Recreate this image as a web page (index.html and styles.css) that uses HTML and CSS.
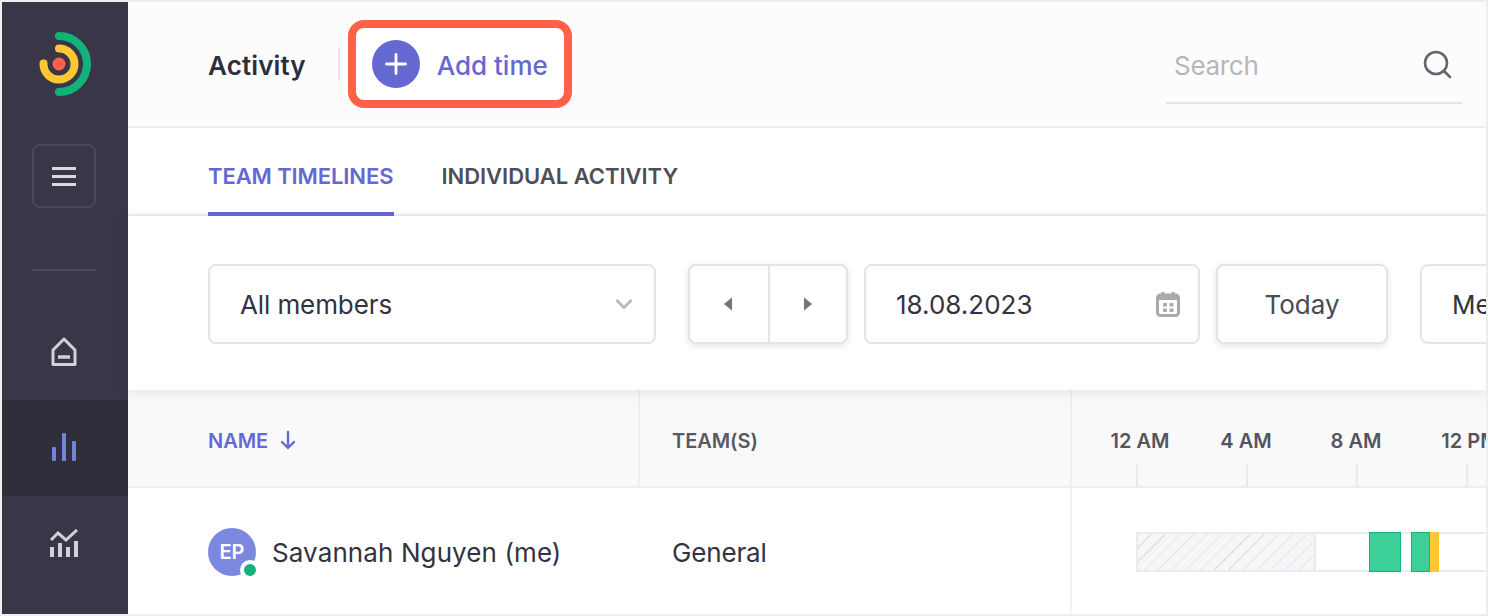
FILE: index.html
```html
<!DOCTYPE html>
<html lang="en">
<head>
<meta charset="utf-8">
<title>Activity</title>
<link rel="stylesheet" href="styles.css">
</head>
<body>
<div class="frame">
  <aside class="sidebar">
    <div class="logo">
      <svg width="64" height="72" viewBox="0 0 64 72" fill="none" stroke-linecap="round" stroke-width="8">
        <path d="M32 8a28 28 0 0 1 0 56" stroke="#12b27b"/>
        <path d="M32 20.500a15.500 15.500 0 1 1-15.500 15" stroke="#ffc833"/>
        <circle cx="32" cy="36" r="6.500" fill="#ff6148" stroke="none"/>
      </svg>
    </div>
    <button class="menu-btn" aria-label="Menu">
      <span class="menu-line"></span><span class="menu-line"></span><span class="menu-line"></span>
    </button>
    <div class="side-divider"></div>
    <div class="side-item">
      <svg width="26" height="30" viewBox="0 0 26 30" fill="none" stroke="#d2d2d6" stroke-width="3" stroke-linejoin="round">
        <path d="M2 13 13 2l11 11v14.500H2z"/>
        <path d="M7 20h12" stroke-width="3.500"/>
      </svg>
    </div>
    <div class="side-item active">
      <svg width="24" height="30" viewBox="0 0 24 30" fill="#7483dd">
        <rect x="0" y="14" width="4" height="14" rx="1"/>
        <rect x="10" y="0" width="4" height="28" rx="1"/>
        <rect x="20" y="8" width="4" height="20" rx="1"/>
      </svg>
    </div>
    <div class="side-item">
      <svg width="30" height="30" viewBox="0 0 30 30" fill="#d2d2d6">
        <path d="M2 11 9 4l8 7L28 1" fill="none" stroke="#d2d2d6" stroke-width="3"/>
        <rect x="1" y="18" width="4" height="10"/>
        <rect x="9" y="14" width="4" height="14"/>
        <rect x="17" y="18" width="4" height="10"/>
        <rect x="25" y="12" width="4" height="16"/>
      </svg>
    </div>
  </aside>

  <main class="main">
    <header class="topbar">
      <h1 class="page-title">Activity</h1>
      <span class="title-sep"></span>
      <button class="add-time">
        <span class="add-circle">
          <svg width="22" height="22" viewBox="0 0 22 22" stroke="#fff" stroke-width="2.800" stroke-linecap="round"><path d="M11 1.500v19M1.500 11h19"/></svg>
        </span>
        <span class="add-label">Add time</span>
      </button>
      <div class="search">
        <span class="search-text">Search</span>
        <svg width="30" height="30" viewBox="0 0 30 30" fill="none" stroke="#65656d" stroke-width="2.600" stroke-linecap="round"><circle cx="13" cy="13" r="11"/><path d="m21 21 6 6"/></svg>
      </div>
    </header>

    <nav class="tabs">
      <span class="tab current">TEAM TIMELINES</span>
      <span class="tab">INDIVIDUAL ACTIVITY</span>
    </nav>

    <section class="filters">
      <div class="field select">
        <span class="members">All members</span>
        <svg width="18" height="12" viewBox="0 0 18 12" fill="none" stroke="#b7b7bd" stroke-width="2.800"><path d="m1.500 2 7.500 7.500L16.500 2"/></svg>
      </div>
      <div class="pager raised">
        <span class="pager-btn"><svg width="10" height="14" viewBox="0 0 10 14" fill="#74747b"><path d="M9 .5v13L1 7z"/></svg></span>
        <span class="pager-btn"><svg width="10" height="14" viewBox="0 0 10 14" fill="#74747b"><path d="M1 .5v13L9 7z"/></svg></span>
      </div>
      <div class="field date">
        <span>18.08.2023</span>
        <svg width="24" height="26" viewBox="0 0 24 26" fill="none">
          <rect x="1.500" y="4" width="21" height="20.500" rx="3" stroke="#a9a9af" stroke-width="3"/>
          <path d="M2 5h20v4H2z" fill="#a9a9af"/>
          <path d="M7 1v5M17 1v5" stroke="#a9a9af" stroke-width="3"/>
          <path d="M7 12h4v3.500H7zM13.500 12h4v3.500h-4zM7 17.500h4V21H7zM13.500 17.500h4V21h-4z" fill="#a9a9af"/>
        </svg>
      </div>
      <div class="today raised">Today</div>
      <div class="field me"><span>Me</span></div>
    </section>

    <section class="table">
      <div class="thead">
        <div class="col-name">
          <span class="th sorted">NAME</span>
          <svg width="16" height="20" viewBox="0 0 16 20" fill="none" stroke="#6568d6" stroke-width="2.400" stroke-linecap="round" stroke-linejoin="round"><path d="M8 2v16M2 12l6 6 6-6"/></svg>
        </div>
        <div class="col-team"><span class="th">TEAM(S)</span></div>
        <div class="col-time hours">
          <div class="hour"><span class="noon">12 AM</span><i></i></div>
          <div class="hour"><span>4 AM</span><i></i></div>
          <div class="hour"><span>8 AM</span><i></i></div>
          <div class="hour"><span class="noon">12 PM</span><i></i></div>
        </div>
      </div>
      <div class="trow">
        <div class="col-name">
          <div class="avatar">EP<span class="status"></span></div>
          <span class="person wide">Savannah Nguyen (me)</span>
        </div>
        <div class="col-team"><span class="person narrow">General</span></div>
        <div class="col-time">
          <div class="bar">
            <span class="hatch"></span>
            <span class="seg green first"></span>
            <span class="seg green second"></span>
            <span class="seg yellow"></span>
          </div>
        </div>
      </div>
    </section>
  </main>
</div>
</body>
</html>
```

FILE: styles.css
```css
* { box-sizing: border-box; }
html, body { margin: 0; height: 616px; overflow: hidden; background: #fff; }
body { font-family: Inter, "Liberation Sans", sans-serif; color: #33323f; }

.frame {
  width: 1488px;
  height: 616px;
  border: 2px solid #eeeef1;
  display: flex;
  overflow: hidden;
}

/* sidebar */
.sidebar {
  width: 126px;
  flex: none;
  background: #393647;
  display: flex;
  flex-direction: column;
  align-items: center;
}
.logo { height: 124px; padding: 26px 0 0 25px; width: 100%; }
.logo svg { display: block; }
.menu-btn {
  width: 64px;
  height: 64px;
  margin: 18px 2px 0 0;
  background: none;
  border: 2px solid #484858;
  border-radius: 8px;
  padding: 0;
  display: flex;
  flex-direction: column;
  align-items: center;
  justify-content: center;
  gap: 5px;
}
.menu-line { width: 24px; height: 3px; background: #d9d9de; }
.side-divider { width: 64px; height: 2px; background: #4b4a59; margin: 61px 2px 33px 0; }
.side-item {
  width: 100%;
  height: 96px;
  flex: none;
  display: flex;
  align-items: center;
  justify-content: center;
  padding-right: 2px;
}
.side-item.active { background: #302e3b; }

/* main */
.main { flex: 1; min-width: 0; display: flex; flex-direction: column; }

.topbar {
  height: 126px;
  flex: none;
  background: #fcfcfd;
  border-bottom: 2px solid #eeeef1;
  display: flex;
  align-items: center;
  padding: 0 24px 0 80px;
}
.page-title { margin: 0; padding-top: 4px; font-size: 26px; line-height: 32px; font-weight: 600; color: #2f2e3b; letter-spacing: 0.12px; }
.title-sep { width: 2px; height: 32px; background: #e4e4ec; margin-left: 32px; }
.add-time {
  margin-left: 8px;
  width: 224px;
  height: 88px;
  background: #fff;
  border: 8px solid #ff6148;
  border-radius: 16px;
  display: flex;
  align-items: center;
  padding: 0 0 0 16px;
  font: inherit;
}
.add-circle {
  width: 48px;
  height: 48px;
  border-radius: 50%;
  background: #6568d0;
  display: flex;
  align-items: center;
  justify-content: center;
  flex: none;
}
.add-label { margin-left: 17px; padding-top: 2px; font-size: 26px; font-weight: 500; color: #6568d0; white-space: nowrap; }
.search {
  margin: 0 0 22px auto;
  width: 296px;
  height: 76px;
  border-bottom: 2px solid #e4e4ec;
  display: flex;
  align-items: center;
  justify-content: space-between;
  padding: 0 9px 0 8px;
  align-self: flex-end;
}
.search-text { font-size: 26px; color: #b6b6bd; letter-spacing: -0.3px; }

.tabs {
  height: 88px;
  flex: none;
  background: #fff;
  border-bottom: 2px solid #eeeef1;
  display: flex;
  align-items: stretch;
  gap: 47px;
  padding-left: 80px;
}
.tab {
  display: flex;
  align-items: center;
  font-size: 22px;
  font-weight: 600;
  color: #4f4e58;
  white-space: nowrap;
  padding-top: 12px;
  height: 88px;
  border-bottom: 4px solid transparent;
  letter-spacing: -0.02px;
}
.tab.current { color: #6568d0; border-bottom-color: #6568d0; letter-spacing: -0.1px; padding-right: 1px; }

.filters {
  height: 174px;
  flex: none;
  background: #fff;
  display: flex;
  align-items: center;
  padding: 0 0 0 80px;
  box-shadow: 0 2px 12px rgba(40, 40, 70, 0.10);
  position: relative;
  z-index: 1;
}
.field, .pager, .today {
  height: 80px;
  border: 2px solid #e3e3ec;
  border-radius: 8px;
  background: #fff;
  font-size: 26px;
  color: #33323f;
  flex: none;
  margin-top: 2px;
}
.field { display: flex; align-items: center; justify-content: space-between; }
.raised { box-shadow: 0 2px 6px rgba(60, 60, 100, 0.14); }
.select { width: 448px; padding: 0 21px 0 30px; }
.members { letter-spacing: -0.1px; }
.pager { width: 160px; margin-left: 32px; display: flex; }
.pager-btn { flex: 1; display: flex; align-items: center; justify-content: center; }
.pager-btn:first-child { padding-right: 2px; }
.pager-btn + .pager-btn { border-left: 2px solid #e3e3ec; }
.date { width: 336px; margin-left: 16px; padding: 0 18px 0 30px; }
.today {
  width: 172px;
  margin-left: 16px;
  display: flex;
  align-items: center;
  justify-content: center;
  color: #4a4954;
}
.me { width: 200px; margin-left: 32px; padding-left: 30px; }

.table { flex: 1; display: flex; flex-direction: column; min-height: 0; }
.thead {
  height: 98px;
  flex: none;
  background: #f9f9fa;
  border-bottom: 2px solid #eeeef1;
  display: flex;
}
.trow { flex: 1; display: flex; background: #fff; min-height: 0; }
.col-name {
  width: 512px;
  flex: none;
  padding-left: 80px;
  display: flex;
  align-items: center;
  border-right: 2px solid #eeeef1;
}
.col-team {
  width: 432px;
  flex: none;
  padding-left: 32px;
  display: flex;
  align-items: center;
  border-right: 2px solid #eeeef1;
}
.thead .col-name, .thead .col-team { align-items: flex-start; padding-top: 39px; }
.thead .col-name svg { margin-left: 12px; margin-top: 1px; }
.trow .col-name, .trow .col-team { padding-top: 2px; border-right-color: transparent; }
.trow .col-team { border-right: 2px solid #f3f3f5; }
.th { font-size: 20px; line-height: 24px; font-weight: 600; color: #5a5962; letter-spacing: -0.05px; }
.th.sorted { color: #6568d6; }
.col-time { flex: 1; min-width: 0; overflow: hidden; }
.hours { display: flex; padding-left: 10px; }
.hour {
  width: 110px;
  flex: none;
  height: 96px;
  display: flex;
  flex-direction: column;
  align-items: center;
  padding-top: 37px;
}
.hour span { font-size: 20px; line-height: 28px; font-weight: 600; color: #55545d; white-space: nowrap; padding-right: 2px; }
.hour span.noon { padding: 0 0 0 6px; }
.hour i { display: block; width: 2px; height: 22px; background: #e9e9ec; margin-top: auto; }

.avatar {
  width: 48px;
  height: 48px;
  border-radius: 50%;
  background: #7c87de;
  color: #fff;
  font-size: 20px;
  font-weight: 600;
  display: flex;
  align-items: center;
  justify-content: center;
  position: relative;
  flex: none;
}
.status {
  position: absolute;
  right: -4px;
  bottom: -4px;
  width: 20px;
  height: 20px;
  border-radius: 50%;
  background: #12b27b;
  border: 4px solid #fff;
}
.person { font-size: 26px; color: #33323f; white-space: nowrap; }
.avatar + .person { margin-left: 16px; }
.wide { letter-spacing: 0.1px; }
.narrow { letter-spacing: -0.15px; }

.trow .col-time { padding: 44px 0 0 64px; }
.bar {
  height: 40px;
  border: 2px solid #ebebee;
  display: flex;
  margin-right: -4px;
}
.hatch {
  width: 178px;
  flex: none;
  border-right: 2px solid #ebebee;
  background: #f6f6f8 repeating-linear-gradient(135deg, #f6f6f8 0 9px, #e0e0e5 9px 10px);
}
.seg { flex: none; height: 40px; margin-top: -2px; }
.green { background: #3dcf98; border: 1px solid #18b47e; }
.first { width: 32px; margin-left: 53px; }
.second { width: 19px; margin-left: 10px; }
.yellow { width: 9px; background: #ffc733; }
```
